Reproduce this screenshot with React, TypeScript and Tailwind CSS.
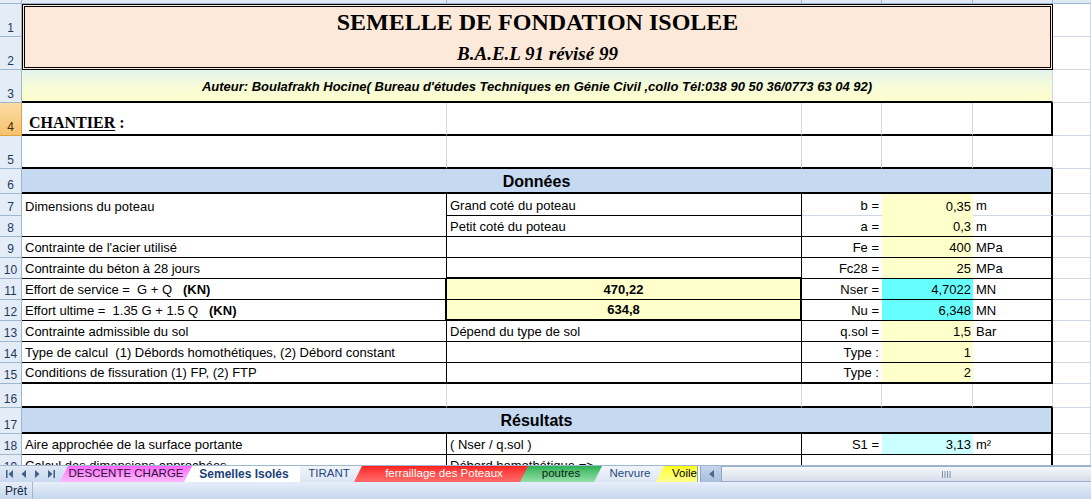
import React from "react";

type B = "g" | "k" | "K" | "n";

function bb(b: B) {
  if (b === "g") return "border-b border-b-[#d0d7e5]";
  if (b === "k") return "border-b border-b-black";
  if (b === "K") return "border-b-2 border-b-black";
  return "";
}

function br(b: B) {
  if (b === "g") return "border-r border-r-[#d0d7e5]";
  if (b === "k") return "border-r border-r-black";
  if (b === "K") return "border-r-2 border-r-black";
  return "";
}

function Cell({
  b = "g",
  r = "g",
  className = "",
  children,
}: {
  b?: B;
  r?: B;
  className?: string;
  children?: React.ReactNode;
}) {
  return (
    <div
      className={`${bb(b)} ${br(r)} flex items-end overflow-hidden whitespace-pre px-[3px] pb-[3px] text-[13px] leading-none ${className}`}
    >
      {children}
    </div>
  );
}

function Rh({ n, active = false }: { n: number; active?: boolean }) {
  return (
    <div
      className={`flex items-end justify-center border-r border-b pb-[2px] text-[12px] leading-none ${
        active
          ? "bg-linear-to-b from-[#fbdca6] to-[#f6c26a] border-r-[#e0a040] border-b-[#e0a040] text-[#3c2a08]"
          : "bg-[#e4ecf7] border-r-[#9eb6ce] border-b-[#9eb6ce] text-[#1e395b]"
      }`}
    >
      {n}
    </div>
  );
}

const F = () => <Cell />;

function Sheet() {
  return (
    <div className="h-[465px] overflow-hidden">
      <div className="grid grid-cols-[22px_425px_355px_80px_91px_80px_1fr] grid-rows-[4px_33px_33px_33px_33px_33px_25px_22px_21px_21px_21px_21px_21px_21px_21px_21px_24px_26px_21px_21px]">
        {/* bottom of the column headers */}
        <div className="border-r border-b border-[#9eb6ce] bg-[#e4ecf7]" />
        <div className="border-r border-b border-[#9eb6ce] bg-[#dfe8f5]" />
        <div className="border-r border-b border-[#9eb6ce] bg-[#dfe8f5]" />
        <div className="border-r border-b border-[#9eb6ce] bg-[#dfe8f5]" />
        <div className="border-r border-b border-[#9eb6ce] bg-[#dfe8f5]" />
        <div className="border-r border-b border-[#9eb6ce] bg-[#dfe8f5]" />
        <div className="border-b border-[#9eb6ce] bg-[#dfe8f5]" />

        {/* 1-2 title */}
        <Rh n={1} />
        <div className="col-span-5 row-span-2 flex flex-col border-[3px] border-double border-black bg-[#fde9d9] font-['Liberation_Serif','Times_New_Roman',serif] font-bold">
          <div className="flex h-[30px] items-end justify-center pb-[3px] text-[24px] leading-none">
            SEMELLE DE FONDATION ISOLEE
          </div>
          <div className="flex h-[30px] items-end justify-center pb-[4px] text-[19px] italic leading-none">
            B.A.E.L 91 révisé 99
          </div>
        </div>
        <F />
        <Rh n={2} />
        <F />

        {/* 3 author */}
        <Rh n={3} />
        <div className="col-span-5 flex items-center justify-center border-b-2 border-b-black border-r border-r-[#d0d7e5] bg-linear-to-b from-[#e2f4ee] via-[#f6fbd8] to-[#fdfdcc] pt-[3px] text-[13px] font-bold italic">
          Auteur: Boulafrakh Hocine( Bureau d'études Techniques en Génie Civil ,collo Tél:038 90 50 36/0773 63 04 92)
        </div>
        <F />

        {/* 4 chantier */}
        <Rh n={4} active />
        <Cell b="K" className="items-center pl-[7px] pt-[4px] pb-0 font-['Liberation_Serif','Times_New_Roman',serif] text-[16px] font-bold">
          <span className="underline decoration-1 underline-offset-2">CHANTIER</span> :
        </Cell>
        <Cell b="K" />
        <Cell b="K" />
        <Cell b="K" />
        <Cell b="K" r="K" />
        <F />

        {/* 5 */}
        <Rh n={5} />
        <Cell b="K" />
        <Cell b="K" />
        <Cell b="K" />
        <Cell b="K" />
        <Cell b="K" />
        <F />

        {/* 6 Données */}
        <Rh n={6} />
        <div className="col-span-5 flex items-center justify-center border-b-2 border-r-2 border-black bg-[#c5d9f1] pt-[2px] text-[16px] font-bold">
          Données
        </div>
        <F />

        {/* 7 */}
        <Rh n={7} />
        <Cell b="n" r="k">Dimensions du poteau</Cell>
        <Cell b="k" r="k">Grand coté du poteau</Cell>
        <Cell b="g" r="n" className="justify-end">b =</Cell>
        <Cell b="n" r="n" className="justify-end bg-[#ffffcc] pr-[2px]">0,35</Cell>
        <Cell b="g" r="K">m</Cell>
        <F />

        {/* 8 */}
        <Rh n={8} />
        <Cell b="k" r="k" />
        <Cell b="k" r="k">Petit coté du poteau</Cell>
        <Cell b="k" r="n" className="justify-end">a =</Cell>
        <Cell b="k" r="n" className="justify-end bg-[#ffffcc] pr-[2px]">0,3</Cell>
        <Cell b="k" r="K">m</Cell>
        <F />

        {/* 9 */}
        <Rh n={9} />
        <Cell b="k" r="k">Contrainte de l'acier utilisé</Cell>
        <Cell b="k" r="k" />
        <Cell b="k" r="n" className="justify-end">Fe =</Cell>
        <Cell b="k" r="n" className="justify-end bg-[#ffffcc] pr-[2px]">400</Cell>
        <Cell b="k" r="K">MPa</Cell>
        <F />

        {/* 10 */}
        <Rh n={10} />
        <Cell b="k" r="k">Contrainte du béton à 28 jours</Cell>
        <Cell b="K" r="k" />
        <Cell b="k" r="n" className="justify-end">Fc28 =</Cell>
        <Cell b="k" r="n" className="justify-end bg-[#ffffcc] pr-[2px]">25</Cell>
        <Cell b="k" r="K">MPa</Cell>
        <F />

        {/* 11 */}
        <Rh n={11} />
        <Cell b="k" r="K">
          Effort de service =  G + Q   <b>(KN)</b>
        </Cell>
        <Cell b="k" r="K" className="justify-center bg-[#ffffcc] font-bold">470,22</Cell>
        <Cell b="k" r="n" className="justify-end">Nser =</Cell>
        <Cell b="k" r="n" className="justify-end bg-[#66ffff] pr-[2px]">4,7022</Cell>
        <Cell b="k" r="K">MN</Cell>
        <F />

        {/* 12 */}
        <Rh n={12} />
        <Cell b="k" r="K">
          Effort ultime =  1.35 G + 1.5 Q   <b>(KN)</b>
        </Cell>
        <Cell b="K" r="K" className="justify-center bg-[#ffffcc] font-bold">634,8</Cell>
        <Cell b="k" r="n" className="justify-end">Nu =</Cell>
        <Cell b="k" r="n" className="justify-end bg-[#66ffff] pr-[2px]">6,348</Cell>
        <Cell b="k" r="K">MN</Cell>
        <F />

        {/* 13 */}
        <Rh n={13} />
        <Cell b="k" r="k">Contrainte admissible du sol</Cell>
        <Cell b="k" r="k">Dépend du type de sol</Cell>
        <Cell b="k" r="n" className="justify-end">q.sol =</Cell>
        <Cell b="k" r="n" className="justify-end bg-[#ffffcc] pr-[2px]">1,5</Cell>
        <Cell b="k" r="K">Bar</Cell>
        <F />

        {/* 14 */}
        <Rh n={14} />
        <Cell b="k" r="k">Type de calcul  (1) Débords homothétiques, (2) Débord constant</Cell>
        <Cell b="k" r="k" />
        <Cell b="k" r="n" className="justify-end">Type :</Cell>
        <Cell b="k" r="n" className="justify-end bg-[#ffffcc] pr-[2px]">1</Cell>
        <Cell b="k" r="K" />
        <F />

        {/* 15 */}
        <Rh n={15} />
        <Cell b="K" r="k">Conditions de fissuration (1) FP, (2) FTP</Cell>
        <Cell b="K" r="k" />
        <Cell b="K" r="n" className="justify-end">Type :</Cell>
        <Cell b="K" r="n" className="justify-end bg-[#ffffcc] pr-[2px]">2</Cell>
        <Cell b="K" r="K" />
        <F />

        {/* 16 */}
        <Rh n={16} />
        <Cell b="K" />
        <Cell b="K" />
        <Cell b="K" />
        <Cell b="K" />
        <Cell b="K" />
        <F />

        {/* 17 Résultats */}
        <Rh n={17} />
        <div className="col-span-5 flex items-center justify-center border-b-2 border-r-2 border-black bg-[#c5d9f1] pt-[2px] text-[16px] font-bold">
          Résultats
        </div>
        <F />

        {/* 18 */}
        <Rh n={18} />
        <Cell b="k" r="k">Aire approchée de la surface portante</Cell>
        <Cell b="k" r="k">( Nser / q.sol )</Cell>
        <Cell b="k" r="n" className="justify-end">S1 =</Cell>
        <Cell b="k" r="n" className="justify-end bg-[#ccffff] pr-[2px]">3,13</Cell>
        <Cell b="k" r="K">m²</Cell>
        <F />

        {/* 19 */}
        <Rh n={19} />
        <Cell b="k" r="k">Calcul des dimensions approchées</Cell>
        <Cell b="k" r="k">Débord homothétique =&gt;</Cell>
        <Cell b="k" r="n" />
        <Cell b="k" r="n" />
        <Cell b="k" r="K" />
        <F />
      </div>
    </div>
  );
}

function NavArrows() {
  return (
    <div className="flex h-full w-[60px] items-center justify-around px-[2px] text-[#3f5f87]">
      <svg width="8" height="8" viewBox="0 0 8 8">
        <rect x="0" y="0" width="1.5" height="8" fill="currentColor" />
        <polygon points="7,0 7,8 2.5,4" fill="currentColor" />
      </svg>
      <svg width="6" height="8" viewBox="0 0 6 8">
        <polygon points="5,0 5,8 0.5,4" fill="currentColor" />
      </svg>
      <svg width="6" height="8" viewBox="0 0 6 8">
        <polygon points="1,0 1,8 5.5,4" fill="currentColor" />
      </svg>
      <svg width="8" height="8" viewBox="0 0 8 8">
        <polygon points="1,0 1,8 5.5,4" fill="currentColor" />
        <rect x="6.5" y="0" width="1.5" height="8" fill="currentColor" />
      </svg>
    </div>
  );
}

function TabBar() {
  return (
    <div className="flex h-[17px] border-t border-[#9eb6ce] bg-linear-to-b from-[#dfe9f6] to-[#c9d9ef] text-[11.5px] leading-none">
      <NavArrows />
      <div className="flex h-full">
        <div className="relative z-[1] flex h-full w-[132px] items-center justify-center bg-linear-to-b from-[#ff66ff] to-[#ffb8ff] text-[#2a1030] [clip-path:polygon(8px_0,100%_0,100%_100%,0_100%)]">
          DESCENTE CHARGE
        </div>
        <div className="relative z-[9] -ml-[8px] flex h-full w-[116px] items-center justify-center bg-white pl-[4px] text-[12px] font-bold text-[#1b3f78] [clip-path:polygon(8px_0,100%_0,100%_100%,0_100%)]">
          Semelles Isolés
        </div>
        <div className="relative z-[2] -ml-[8px] flex h-full w-[70px] items-center justify-center bg-linear-to-b from-[#f1f5fb] to-[#dce6f4] pl-[4px] text-[#1f497d] [clip-path:polygon(8px_0,100%_0,100%_100%,0_100%)]">
          TIRANT
        </div>
        <div className="relative z-[3] -ml-[8px] flex h-full w-[174px] items-center justify-center bg-linear-to-b from-[#ff1e1e] to-[#ff6a6a] pl-[6px] text-white [clip-path:polygon(8px_0,100%_0,100%_100%,0_100%)]">
          ferraillage des Poteaux
        </div>
        <div className="relative z-[4] -ml-[8px] flex h-full w-[82px] items-center justify-center bg-linear-to-b from-[#26b256] to-[#92dfa8] text-[#0c2412] [clip-path:polygon(8px_0,100%_0,100%_100%,0_100%)]">
          poutres
        </div>
        <div className="relative z-[5] -ml-[8px] flex h-full w-[70px] items-center justify-center bg-linear-to-b from-[#f1f5fb] to-[#dce6f4] pl-[2px] text-[#1f497d] [clip-path:polygon(8px_0,100%_0,100%_100%,0_100%)]">
          Nervure
        </div>
        <div className="relative z-[6] -ml-[8px] flex h-full w-[41px] items-center overflow-hidden bg-linear-to-b from-[#ffff00] to-[#ffff8a] pl-[16px] text-black [clip-path:polygon(8px_0,100%_0,100%_100%,0_100%)]">
          Voile
        </div>
      </div>
      <div className="h-full w-[4px] border-x border-[#8ea4c4] bg-[#f4f7fb]" />
      <div className="flex h-full w-[21px] items-center justify-center border-r border-[#8ea4c4] bg-linear-to-b from-[#c5d5ea] to-[#a9bfdc]">
        <svg width="5" height="8" viewBox="0 0 5 8">
          <polygon points="5,0 5,8 0,4" fill="#4a6688" />
        </svg>
      </div>
      <div className="flex h-full flex-1 items-center border-y border-[#9cb0ce] bg-linear-to-b from-[#f6f8fb] to-[#d6deea] pl-[220px]">
        <svg width="9" height="7" viewBox="0 0 9 7">
          <rect x="0" y="0" width="1" height="7" fill="#7c8ea8" />
          <rect x="2.5" y="0" width="1" height="7" fill="#7c8ea8" />
          <rect x="5" y="0" width="1" height="7" fill="#7c8ea8" />
          <rect x="7.5" y="0" width="1" height="7" fill="#7c8ea8" />
        </svg>
      </div>
    </div>
  );
}

function StatusBar() {
  return (
    <div className="flex h-[17px] items-center bg-linear-to-b from-[#e6eef9] to-[#c6d7ee] text-[12px] leading-none text-[#15283f]">
      <div className="flex h-full w-[33px] items-center border-r border-[#9eb6ce] pl-[5px]">Prêt</div>
    </div>
  );
}

export default function App() {
  return (
    <div className="h-[499px] w-[1091px] overflow-hidden bg-white font-['Liberation_Sans',Arial,sans-serif] text-black">
      <Sheet />
      <TabBar />
      <StatusBar />
    </div>
  );
}
